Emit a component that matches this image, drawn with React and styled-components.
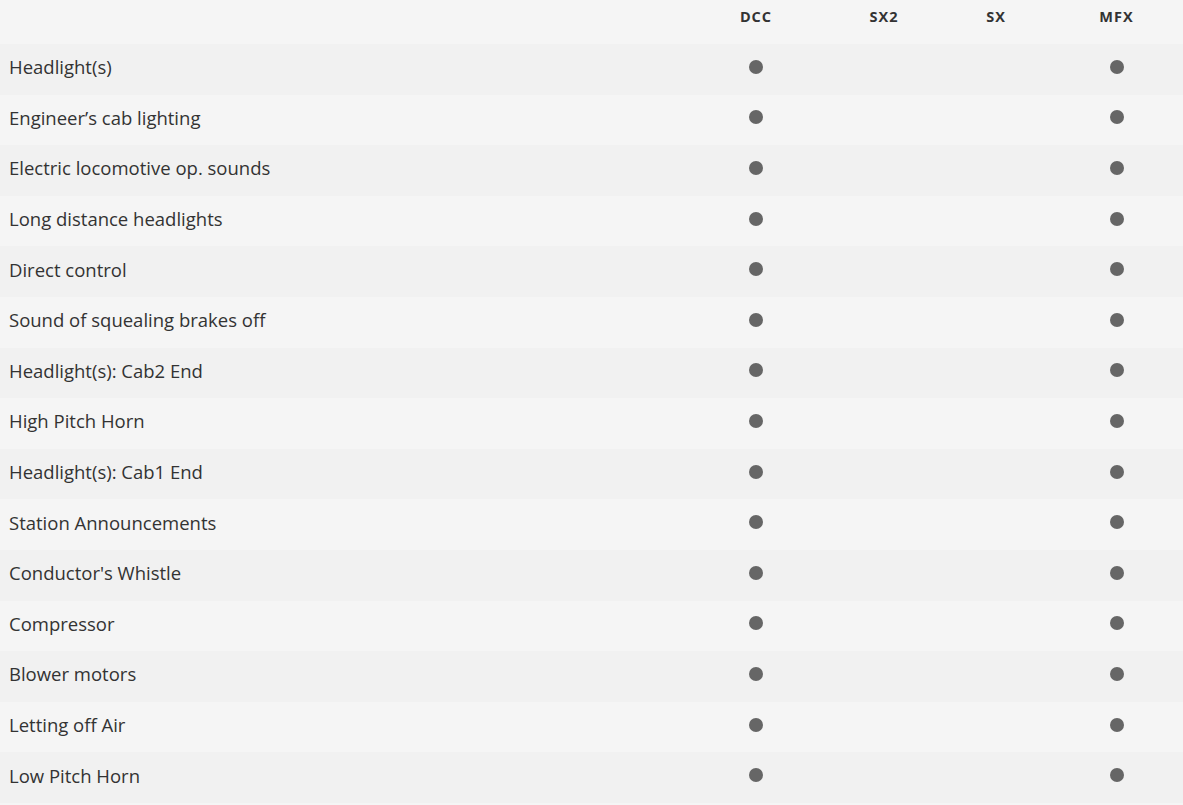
import styled, { createGlobalStyle } from "styled-components";

const GlobalStyle = createGlobalStyle`
  body {
    margin: 0;
    background: #f5f5f5;
    font-family: "Open Sans", "Liberation Sans", sans-serif;
    color: #333;
  }
`;

const systems = ["DCC", "SX2", "SX", "MFX"];

const functions = [
  { name: "Headlight(s)", on: ["DCC", "MFX"] },
  { name: "Engineer\u2019s cab lighting", on: ["DCC", "MFX"] },
  { name: "Electric locomotive op. sounds", on: ["DCC", "MFX"] },
  { name: "Long distance headlights", on: ["DCC", "MFX"] },
  { name: "Direct control", on: ["DCC", "MFX"] },
  { name: "Sound of squealing brakes off", on: ["DCC", "MFX"] },
  { name: "Headlight(s): Cab2 End", on: ["DCC", "MFX"] },
  { name: "High Pitch Horn", on: ["DCC", "MFX"] },
  { name: "Headlight(s): Cab1 End", on: ["DCC", "MFX"] },
  { name: "Station Announcements", on: ["DCC", "MFX"] },
  { name: "Conductor's Whistle", on: ["DCC", "MFX"] },
  { name: "Compressor", on: ["DCC", "MFX"] },
  { name: "Blower motors", on: ["DCC", "MFX"] },
  { name: "Letting off Air", on: ["DCC", "MFX"] },
  { name: "Low Pitch Horn", on: ["DCC", "MFX"] },
];

function App() {
  return (
    <>
      <GlobalStyle />
      <Table>
        <HeadRow>
          <LabelCell />
          {systems.map((s) => (
            <HeadCell key={s} $last={s === "MFX"}>{s}</HeadCell>
          ))}
        </HeadRow>
        {functions.map((f, i) => (
          <Row key={f.name} $odd={i % 2 === 0}>
            <LabelCell>{f.name}</LabelCell>
            {systems.map((s) => (
              <DotCell key={s} $last={s === "MFX"}>
                {f.on.includes(s) && <Dot />}
              </DotCell>
            ))}
          </Row>
        ))}
      </Table>
    </>
  );
}
export default App;

const Table = styled.div`
  width: 100%;
  display: flex;
  flex-direction: column;
`;

const Grid = styled.div`
  display: grid;
  grid-template-columns: 692px 128px 128px 96px 1fr;
  align-items: center;
`;

const HeadRow = styled(Grid)`
  height: 44px;
  background: #f5f5f5;
`;

const Row = styled(Grid)`
  height: 50.6px;
  padding-bottom: 5px;
  box-sizing: border-box;
  background: ${(p) => (p.$odd ? "#f1f1f1" : "#f5f5f5")};
`;

const LabelCell = styled.div`
  padding-left: 9px;
  font-size: 18.5px;
  color: #333;
  white-space: nowrap;
`;

const HeadCell = styled.div`
  text-align: center;
  font-size: 14.5px;
  font-weight: 700;
  letter-spacing: 1px;
  color: #333;
  padding-left: ${(p) => (p.$last ? "6px" : "0")};
  padding-bottom: 12px;
`;

const DotCell = styled.div`
  display: flex;
  justify-content: center;
  padding-left: ${(p) => (p.$last ? "6px" : "0")};
`;

const Dot = styled.span`
  width: 14px;
  height: 14px;
  border-radius: 50%;
  background: #666;
`;
